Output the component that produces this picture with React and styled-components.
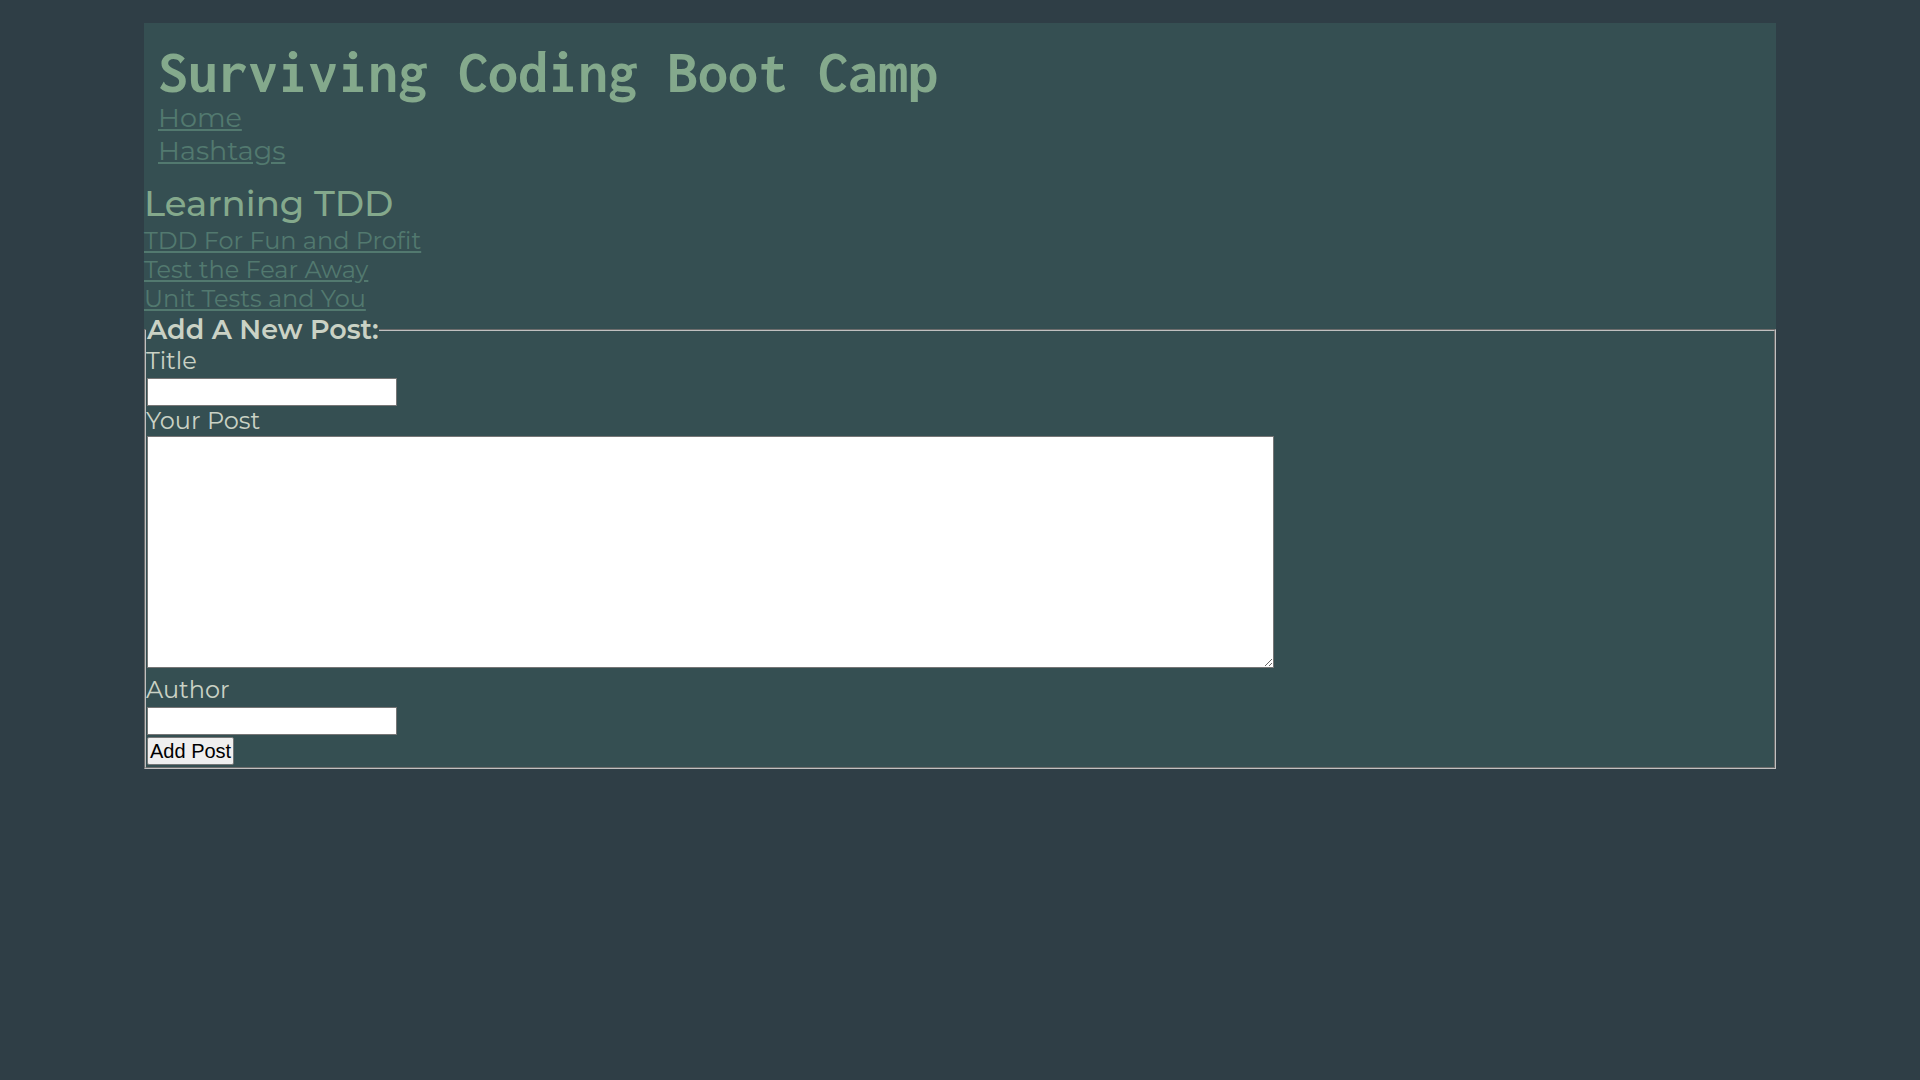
import React, { Component } from 'react';
import styled, { createGlobalStyle } from 'styled-components';

// STYLES
const GlobalStyle = createGlobalStyle`
    body {
        margin: 0;
        background-color: #2f3e46;
        font-family: 'Montserrat', 'DejaVu Sans', sans-serif;
    }
`
const Wrapper = styled.div`
    width: 85%;
    margin: 23px auto 0;
    background-color: #354f52;
`
const Header = styled.header`
    padding: 19px 14px 0;

    h1 {
        margin: 0;
        font-family: 'Inconsolata', 'DejaVu Sans Mono', monospace;
        font-size: 60px;
        font-weight: bold;
        line-height: 59px;
        color: #84a98c;
    }
`
const NavLink = styled.a`
    display: block;
    width: fit-content;
    font-size: 27px;
    line-height: 33px;
    color: #52796f;
    text-decoration: underline;
`
const Section = styled.section`
    margin-top: 14px;

    h2 {
        margin: 0;
        font-size: 35.5px;
        font-weight: 500;
        line-height: 45px;
        color: #84a98c;
    }
`
const PostLink = styled.a`
    display: block;
    width: fit-content;
    font-size: 24px;
    line-height: 29px;
    color: #52796f;
    text-decoration: underline;
`
const Fieldset = styled.fieldset`
    margin: 1px 0 0;
    padding: 0 0 2px;
    border: 2px groove rgb(192, 192, 192);
    min-inline-size: 0;
`
const Legend = styled.legend`
    padding: 0 0 0 1px;
    font-size: 27px;
    font-weight: 600;
    line-height: 32px;
    color: #cad2c5;
`
const Label = styled.label`
    display: block;
    width: fit-content;
    font-size: 24px;
    line-height: 29px;
    color: #cad2c5;
`
const TextInput = styled.input`
    display: block;
    box-sizing: border-box;
    width: 250px;
    height: 28px;
    margin: 3px 0 0 1px;
    background: white;
    border: 1px solid #767676;
`
const TextArea = styled.textarea`
    display: block;
    box-sizing: border-box;
    width: 1127px;
    height: 232px;
    margin: 1px 0 7px 1px;
    background: white;
    border: 1px solid #767676;
`
const SubmitButton = styled.button`
    display: block;
    margin: 2px 0 0 1px;
    padding: 2px 2px;
    font-family: 'Liberation Sans', Arial, sans-serif;
    font-size: 20px;
    line-height: 22px;
    color: black;
    background-color: #efefef;
    border: 1px solid #767676;
    border-radius: 2px;
`

class App extends Component {
    state = {
        posts: [
            { _id: 1, title: 'TDD For Fun and Profit' },
            { _id: 2, title: 'Test the Fear Away' },
            { _id: 3, title: 'Unit Tests and You' }
        ]
    }

    render() {
        return (
            <Wrapper>
                <GlobalStyle />

                <Header>
                    <h1>Surviving Coding Boot Camp</h1>
                    <NavLink href="#">Home</NavLink>
                    <NavLink href="#">Hashtags</NavLink>
                </Header>

                <Section>
                    <h2>Learning TDD</h2>
                    {this.state.posts.map(post => {
                        return (
                            <PostLink key={post._id} href="#">{post.title}</PostLink>
                        )
                    })}
                </Section>

                <form onSubmit={e => e.preventDefault()}>
                    <Fieldset>
                        <Legend>Add A New Post:</Legend>
                        <Label htmlFor="title">Title</Label>
                        <TextInput id="title" type="text" />
                        <Label htmlFor="content">Your Post</Label>
                        <TextArea id="content" />
                        <Label htmlFor="author">Author</Label>
                        <TextInput id="author" type="text" />
                        <SubmitButton type="submit">Add Post</SubmitButton>
                    </Fieldset>
                </form>

            </Wrapper>
        );
    }
}

export default App;
